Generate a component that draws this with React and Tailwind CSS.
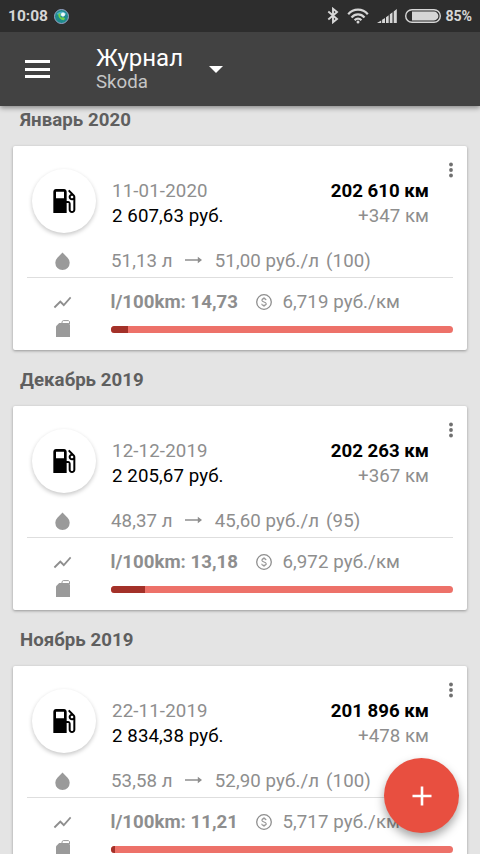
const entries = [
  {
    month: "Январь 2020",
    date: "11-01-2020",
    cost: "2 607,63 руб.",
    odometer: "202 610 км",
    trip: "+347 км",
    volume: "51,13 л",
    price: "51,00 руб./л",
    octane: "(100)",
    consumption: "14,73",
    perKm: "6,719 руб./км",
    used: 17,
  },
  {
    month: "Декабрь 2019",
    date: "12-12-2019",
    cost: "2 205,67 руб.",
    odometer: "202 263 км",
    trip: "+367 км",
    volume: "48,37 л",
    price: "45,60 руб./л",
    octane: "(95)",
    consumption: "13,18",
    perKm: "6,972 руб./км",
    used: 34,
  },
  {
    month: "Ноябрь 2019",
    date: "22-11-2019",
    cost: "2 834,38 руб.",
    odometer: "201 896 км",
    trip: "+478 км",
    volume: "53,58 л",
    price: "52,90 руб./л",
    octane: "(100)",
    consumption: "11,21",
    perKm: "5,717 руб./км",
    used: 4,
  },
];

function StatusBar() {
  return (
    <div className="flex h-8 items-center bg-[#2d2d2d] pl-2 pr-[8px] text-[#d6d6d6]">
      <span className="pt-[2px] text-[15.5px] font-bold">10:08</span>
      <svg className="ml-[6px]" width="15" height="15" viewBox="0 0 15 15">
        <circle cx="7.5" cy="7.5" r="7" fill="#1f8a8c" stroke="#9aa3c8" strokeWidth="1" />
        <path d="M2.5 5C5 1.500 10 1.500 12.500 5L9 8 5 6Z" fill="#4fb3d0" />
        <path d="M4.2 5c0 3.600 2.200 6 5.800 6.200l1-2-2.200-1.200-1 .8C6.8 8.2 6.3 7.6 6 6.8l.8-1-.8-1.800z" fill="#6fcf4a" />
        <circle cx="9" cy="5.6" r="2" fill="#f0faf8" />
      </svg>

      <div className="ml-auto flex items-center">
        <svg width="12" height="17" viewBox="0 0 12 17" fill="none" stroke="currentColor" strokeWidth="1.9">
          <path d="M1.3 4.6L10 11.900 6 15.2V1.8L10 5.100 1.3 12.400" />
        </svg>
        <svg className="ml-2" width="22" height="16" viewBox="0 0 22 16" fill="none" stroke="currentColor" strokeWidth="2.2">
          <path d="M1.2 6.2C6.5.2 15.5.2 20.8 6.2" />
          <path d="M4.5 9.4c3.6-4 9.4-4 13 0" />
          <path d="M7.6 12.200c2-2.2 4.8-2.2 6.8 0" />
          <circle cx="11" cy="14" r="1.5" fill="currentColor" stroke="none" />
        </svg>
        <svg className="ml-[8px]" width="20" height="14" viewBox="0 0 20 14" fill="currentColor">
          <path d="M0 14L4.2 11.4V14zM5.1 10.8L8 8.9V14H5.1zM9 8.2l2.7-2V14H9zM12.8 5.3l2.7-2V14h-2.7zM16.7 2.5L19.8 0v14h-3.1z" />
        </svg>
        <svg className="ml-[8px]" width="36" height="14" viewBox="0 0 36 14">
          <rect x="0.7" y="0.7" width="34.6" height="12.6" rx="6.3" fill="none" stroke="currentColor" strokeWidth="1.4" />
          <path d="M7 2.6h22a4.4 4.4 0 0 1 0 8.8H7z" fill="currentColor" />
        </svg>
        <span className="ml-[5px] pt-[1px] text-[14.2px] font-bold tracking-[-0.1px]">85%</span>
      </div>
    </div>
  );
}

function AppBar() {
  return (
    <header className="relative z-10 bg-[#424242] shadow-[0_2px_5px_rgba(0,0,0,0.4)]">
      <StatusBar />
      <div className="flex h-[74px] items-center">
        <div className="ml-[25px] flex w-[25px] flex-col gap-[4.5px]">
          <span className="h-[3px] bg-white" />
          <span className="h-[3px] bg-white" />
          <span className="h-[3px] bg-white" />
        </div>
        <div className="ml-[46px]">
          <h1 className="text-[24px] leading-[26px] text-white">Журнал</h1>
          <p className="text-[18.67px] leading-[22px] text-[#c6c6c6]">Skoda</p>
        </div>
        <svg className="ml-[26px]" width="14" height="7" viewBox="0 0 14 7" fill="#fff">
          <path d="M0 0h14L7 7z" />
        </svg>
      </div>
    </header>
  );
}

function PumpIcon() {
  return (
    <svg width="32" height="32" viewBox="0 0 24 24" fill="#000">
      <path d="M19.77 7.23l.01-.01-3.72-3.72L15 4.56l2.11 2.11c-.94.36-1.61 1.26-1.61 2.33 0 1.38 1.12 2.5 2.5 2.5.36 0 .69-.08 1-.21v7.21c0 .55-.45 1-1 1s-1-.45-1-1V14c0-1.1-.9-2-2-2h-1V5c0-1.1-.9-2-2-2H6c-1.1 0-2 .9-2 2v16h10v-7.5h1.5v5c0 1.38 1.12 2.5 2.5 2.5s2.5-1.12 2.5-2.5V9c0-.69-.28-1.32-.73-1.77zM12 10H6V5h6v5zm6 0c-.55 0-1-.45-1-1s.45-1 1-1 1 .45 1 1-.45 1-1 1z" />
    </svg>
  );
}

function DropIcon() {
  return (
    <svg width="15" height="18" viewBox="0 0 15 18" fill="#9a9a9a">
      <path d="M7.5 0.5L12.6 5.7a7.2 7.2 0 1 1-10.2 0z" />
    </svg>
  );
}

function TrendIcon() {
  return (
    <svg width="21" height="21" viewBox="0 0 24 24" fill="#8e8e8e">
      <path d="M3.5 18.49l6-6.01 4 4L22 6.92l-1.41-1.41-7.09 7.97-4-4L2 16.99z" />
    </svg>
  );
}

function CanIcon() {
  return (
    <svg width="14" height="17" viewBox="0 0 14 17" fill="#9a9a9a">
      <path d="M0 6.2L3.2 3H12.6L14 4.4V17H0z" />
      <path d="M6 3.2V1.6L7.2.6h5.2L13.5 1.5V4" fill="none" stroke="#9a9a9a" strokeWidth="1" />
    </svg>
  );
}

function CoinIcon() {
  return (
    <svg width="16" height="16" viewBox="0 0 16 16" fill="none" stroke="#8e8e8e">
      <circle cx="8" cy="8" r="7.3" strokeWidth="1.3" />
      <path d="M10.1 6.1C9.9 5 9.1 4.6 8 4.6c-1.2 0-2.1.6-2.1 1.6C5.9 8.5 10.2 7.3 10.2 9.8c0 1-.9 1.6-2.2 1.6s-2.2-.6-2.3-1.7M8 3.2v1.4M8 11.4v1.4" strokeWidth="1.1" />
    </svg>
  );
}

function EntryCard({ entry }) {
  return (
    <article className="relative mx-[13px] h-[204px] rounded-[2px] bg-white text-[18.67px] text-[#8e8e8e] shadow-[0_1px_3px_rgba(0,0,0,0.35)]">
      <svg className="absolute right-[14px] top-4" width="4" height="16" viewBox="0 0 4 16" fill="#707070">
        <circle cx="2" cy="2.5" r="1.9" />
        <circle cx="2" cy="8" r="1.9" />
        <circle cx="2" cy="13.5" r="1.9" />
      </svg>

      <div className="flex h-[99px] pl-[19px] pr-[38px] pt-[23px]">
        <div className="flex h-16 w-16 items-center justify-center rounded-full bg-white shadow-[0_2px_4px_rgba(0,0,0,0.22)]">
          <PumpIcon />
        </div>
        <div className="ml-4 flex flex-1 justify-between pt-[10px] leading-[25px]">
          <div>
            <p className="tracking-[0.15px]">{entry.date}</p>
            <p className="tracking-[0.1px] text-black">{entry.cost}</p>
          </div>
          <div className="text-right">
            <p className="font-bold text-black">{entry.odometer}</p>
            <p className="tracking-[0.05px]">{entry.trip}</p>
          </div>
        </div>
      </div>

      <div className="mx-[14px] flex h-[33px] items-center border-b border-[#dedede]">
        <div className="flex w-[71px] justify-center">
          <DropIcon />
        </div>
        <span className="ml-[13px] tracking-[0.1px]">{entry.volume}</span>
        <svg className="ml-3 mb-[2px]" width="17" height="8" viewBox="0 0 17 8" fill="#8e8e8e">
          <path d="M0 3.3h12.8V.8L17 4l-4.2 3.2V4.7H0z" />
        </svg>
        <span className="ml-[13px] tracking-[0.1px]">{entry.price}</span>
        <span className="ml-[7px] tracking-[0.1px]">{entry.octane}</span>
      </div>

      <div className="mx-[14px] mt-[10px] flex h-7 items-center">
        <div className="flex w-[71px] justify-center">
          <TrendIcon />
        </div>
        <span className="ml-[12.5px] font-bold">l/100km: {entry.consumption}</span>
        <div className="ml-[18px] pb-[1px]">
          <CoinIcon />
        </div>
        <span className="ml-[10.5px] tracking-[0.1px]">{entry.perKm}</span>
      </div>

      <div className="mx-[14px] flex h-[27px] items-center">
        <div className="flex w-[71px] justify-center pb-[3px]">
          <CanIcon />
        </div>
        <div className="ml-[13px] h-[7px] flex-1 overflow-hidden rounded-full bg-[#ed7169]">
          <div className="h-full bg-[#a33129]" style={{ width: entry.used }} />
        </div>
      </div>
    </article>
  );
}

export default function App() {
  return (
    <div className="relative h-[854px] w-[480px] overflow-hidden bg-[#e4e4e4] font-['Roboto',sans-serif]">
      <AppBar />

      <main className="-mt-4">
        {entries.map((entry) => (
          <section key={entry.month}>
            <h2 className="flex h-14 items-center pl-5 pt-[3px] text-[18.67px] font-bold tracking-[0.05px] text-[#5f5f5f]">
              {entry.month}
            </h2>
            <EntryCard entry={entry} />
          </section>
        ))}
      </main>

      <button className="absolute bottom-[21px] right-[21px] flex h-[75px] w-[75px] items-center justify-center rounded-full bg-[#e84f40] shadow-[0_5px_10px_rgba(0,0,0,0.35)]">
        <svg width="20" height="20" viewBox="0 0 20 20" stroke="#fff" strokeWidth="2.6">
          <path d="M10 0.5v19M0.5 10h19" />
        </svg>
      </button>
    </div>
  );
}
